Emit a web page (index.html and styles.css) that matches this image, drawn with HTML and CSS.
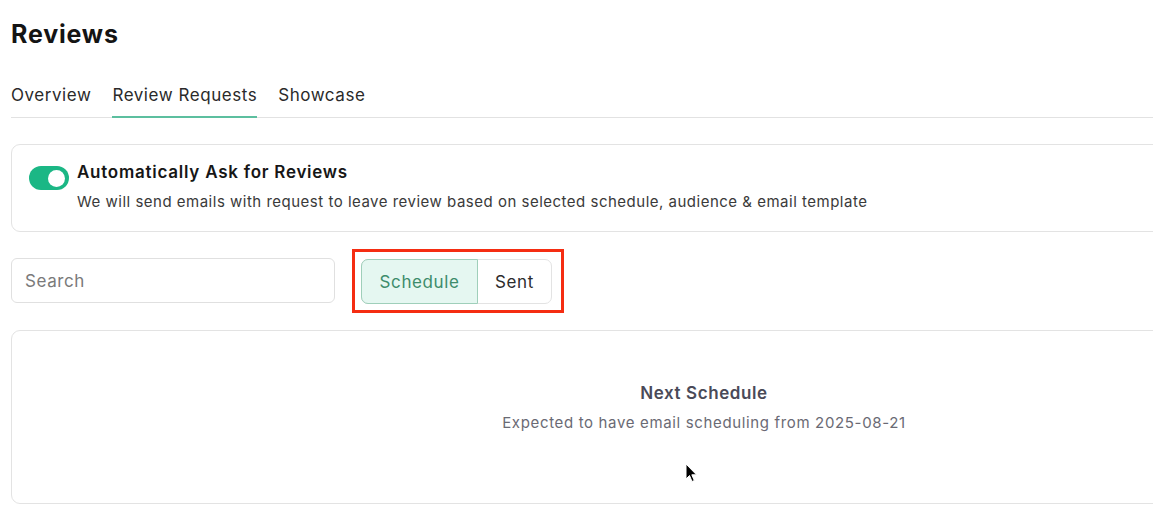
FILE: index.html
```html
<!DOCTYPE html>
<html lang="en">
<head>
<meta charset="utf-8">
<title>Reviews</title>
<link rel="stylesheet" href="styles.css">
</head>
<body>
<div class="page">
  <h1 class="title">Reviews</h1>
  <nav class="tabs">
    <a class="tab">Overview</a>
    <a class="tab active">Review Requests</a>
    <a class="tab">Showcase</a>
  </nav>

  <section class="card auto">
    <span class="toggle"><span class="knob"></span></span>
    <div class="auto-text">
      <div class="auto-title">Automatically Ask for Reviews</div>
      <div class="auto-desc">We will send emails with request to leave review based on selected schedule, audience &amp; email template</div>
    </div>
  </section>

  <div class="toolbar">
    <input class="search" type="text" placeholder="Search">
    <div class="segment">
      <button class="seg active">Schedule</button>
      <button class="seg">Sent</button>
      <span class="highlight"></span>
    </div>
  </div>

  <section class="card schedule">
    <div class="sched-title">Next Schedule</div>
    <div class="sched-desc">Expected to have email scheduling from 2025-08-21</div>
    <svg class="cursor" width="14" height="22" viewBox="0 0 14 22"><path d="M1 1 L1 16 L4.5 12.5 L7 18.5 L9.3 17.5 L6.8 11.8 L11.5 11.8 Z" fill="#000" stroke="#fff" stroke-width="1"/></svg>
  </section>
</div>
</body>
</html>
```
FILE: styles.css
```css
html, body {
  margin: 0;
  padding: 0;
  background: #fff;
  overflow: hidden;
}
body {
  font-family: "Inter", "DejaVu Sans", sans-serif;
  color: #1f1f1f;
}
.page {
  width: 1386px;
  padding: 18px 0 0 11px;
}
.title {
  margin: 0;
  font-size: 25px;
  letter-spacing: 0.8px;
  font-weight: 700;
  line-height: 32px;
  color: #141414;
}
.tabs {
  display: flex;
  gap: 21px;
  margin-top: 34px;
  border-bottom: 1px solid #e2e2e2;
}
.tab {
  font-size: 17px;
  letter-spacing: 0.55px;
  line-height: 22px;
  padding-bottom: 10px;
  color: #2a2a2a;
  border-bottom: 2px solid transparent;
  margin-bottom: -1px;
}
.tab.active {
  border-bottom-color: #5cbf9f;
}
.card {
  border: 1px solid #e3e3e3;
  border-radius: 9px;
  background: #fff;
}
.auto {
  margin-top: 26px;
  height: 88px;
  box-sizing: border-box;
  display: flex;
  align-items: flex-start;
  padding: 15px 17px;
  gap: 8px;
}
.toggle {
  width: 40px;
  height: 24px;
  border-radius: 12px;
  background: #1bb785;
  display: flex;
  align-items: center;
  justify-content: flex-end;
  padding: 0 4px;
  box-sizing: border-box;
  margin-top: 6px;
  flex: none;
}
.knob {
  width: 17px;
  height: 17px;
  border-radius: 50%;
  background: #fff;
}
.auto-title {
  font-size: 17px;
  letter-spacing: 0.75px;
  font-weight: 600;
  line-height: 24px;
  color: #161616;
}
.auto-desc {
  font-size: 15px;
  letter-spacing: 0.5px;
  line-height: 20px;
  margin-top: 8px;
  color: #3a3a3a;
}
.toolbar {
  display: flex;
  align-items: flex-start;
  margin-top: 26px;
  gap: 26px;
}
.search {
  width: 324px;
  height: 45px;
  box-sizing: border-box;
  border: 1px solid #e0e0e0;
  border-radius: 6px;
  padding: 0 13px;
  font-family: inherit;
  font-size: 17px;
  letter-spacing: 0.6px;
  outline: none;
}
.search::placeholder {
  color: #7a7a7a;
}
.segment {
  position: relative;
  display: flex;
  height: 43px;
  margin-top: 1px;
  border: 1px solid #e3e3e3;
  border-radius: 7px;
}
.seg {
  font-family: inherit;
  font-size: 17px;
  letter-spacing: 0.6px;
  border: 0;
  background: transparent;
  color: #2c2c2c;
  padding: 0;
}
.seg.active {
  background: #e5f7f1;
  color: #3d8c6c;
  border: 1px solid #9fcfba;
  border-radius: 7px 0 0 7px;
  margin: -1px 0 -1px -1px;
  width: 117px;
}
.seg:not(.active) {
  width: 73px;
}
.highlight {
  position: absolute;
  left: -10px;
  top: -11px;
  right: -13px;
  bottom: -10px;
  border: 3px solid #f52d12;
  pointer-events: none;
}
.schedule {
  position: relative;
  margin-top: 26px;
  height: 174px;
  box-sizing: border-box;
  text-align: center;
  padding-top: 50px;
}
.sched-title {
  font-size: 17px;
  letter-spacing: 0.6px;
  font-weight: 600;
  line-height: 24px;
  color: #4a4a58;
}
.sched-desc {
  font-size: 15px;
  letter-spacing: 0.65px;
  line-height: 22px;
  margin-top: 7px;
  color: #6a6a74;
}
.cursor {
  position: absolute;
  left: 673px;
  top: 132px;
}
```
